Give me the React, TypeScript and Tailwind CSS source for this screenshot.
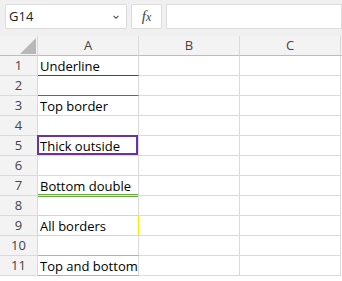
import React from "react";

type Cell = { text?: string; cls?: string; overlay?: string };

const rows: { n: number; a: Cell }[] = [
  { n: 1, a: { text: "Underline", cls: "border-b-[#e0001b]" } },
  { n: 2, a: { cls: "border-b-[#2e75b6]" } },
  { n: 3, a: { text: "Top border" } },
  { n: 4, a: {} },
  { n: 5, a: { text: "Thick outside", overlay: "absolute -left-px -top-px right-0 bottom-0 border-2 border-[#7030a0]" } },
  { n: 6, a: {} },
  { n: 7, a: { text: "Bottom double", overlay: "absolute left-0 right-0 -bottom-[2px] h-[3px] border-y border-[#70ad47]" } },
  { n: 8, a: { cls: "border-b-[#ffe600]" } },
  { n: 9, a: { text: "All borders", cls: "border-b-[#ffe600] border-r-[#ffe600]", overlay: "absolute -left-px top-0 bottom-0 w-px bg-[#ffe600]" } },
  { n: 10, a: { cls: "border-b-[#f0b400]" } },
  { n: 11, a: { text: "Top and bottom", cls: "border-b-[#f0b400]" } },
];

export default function App() {
  return (
    <div className="w-[342px] h-[281px] overflow-hidden bg-white text-[#222]" style={{ fontFamily: '"Open Sans", "Noto Sans", sans-serif' }}>
      {/* formula bar */}
      <div className="h-[36px] bg-[#f0f0f0] flex items-start pt-[4px] gap-[4px] pl-[5px]">
        <div className="w-[122px] h-[25px] bg-white border border-[#dcdcdc] rounded-[2px] flex items-center justify-between pl-[3px] pr-[6px]">
          <span className="text-[13px] text-[#222]">G14</span>
          <svg width="8" height="6" viewBox="0 0 8 6"><path d="M1.5 1.8 L4 4.2 L6.5 1.8" fill="none" stroke="#555" strokeWidth="1.1" /></svg>
        </div>
        <div className="w-[31px] h-[25px] bg-white border border-[#dcdcdc] rounded-[2px] flex items-center justify-center">
          <span className="text-[15px] italic text-[#444] leading-none" style={{ fontFamily: '"Liberation Serif", serif' }}>f<span className="text-[12px]">x</span></span>
        </div>
        <div className="flex-1 h-[25px] bg-white border border-[#dcdcdc]" />
      </div>
      {/* sheet */}
      <div className="grid grid-cols-[38px_101px_101px_101px_1px]">
        {/* header */}
        <div className="h-[20px] bg-[#f3f3f3] border-b border-b-[#bcbcbc] border-r border-r-[#dadada] relative">
          <svg className="absolute left-[20px] top-[2px]" width="16" height="16" viewBox="0 0 16 16"><polygon points="16,0 16,16 0,16" fill="#b8b8b8" /></svg>
        </div>
        {["A", "B", "C"].map((c) => (
          <div key={c} className="h-[20px] bg-[#f3f3f3] border-b border-b-[#bcbcbc] border-r border-r-[#dadada] flex items-center justify-center text-[13px] text-[#444]">{c}</div>
        ))}
        <div className="h-[20px] bg-[#f3f3f3] border-b border-b-[#bcbcbc]" />
        {rows.map((r) => (
          <React.Fragment key={r.n}>
            <div className="h-[20px] bg-[#f3f3f3] border-b border-r border-[#dadada] flex items-center justify-center text-[13px] text-[#444]">{r.n}</div>
            <div className={`h-[20px] border-b border-r border-[#dadada] relative flex items-end pl-[2px] pb-[0px] text-[13px] text-black whitespace-nowrap ${r.a.cls ?? ""}`}>
              {r.a.text && <span className="relative leading-[18px]">{r.a.text}</span>}
              {r.a.overlay && <div className={r.a.overlay} />}
            </div>
            <div className="h-[20px] border-b border-r border-[#dadada]" />
            <div className="h-[20px] border-b border-r border-[#dadada]" />
            <div className="h-[20px]" />
          </React.Fragment>
        ))}
      </div>
    </div>
  );
}
